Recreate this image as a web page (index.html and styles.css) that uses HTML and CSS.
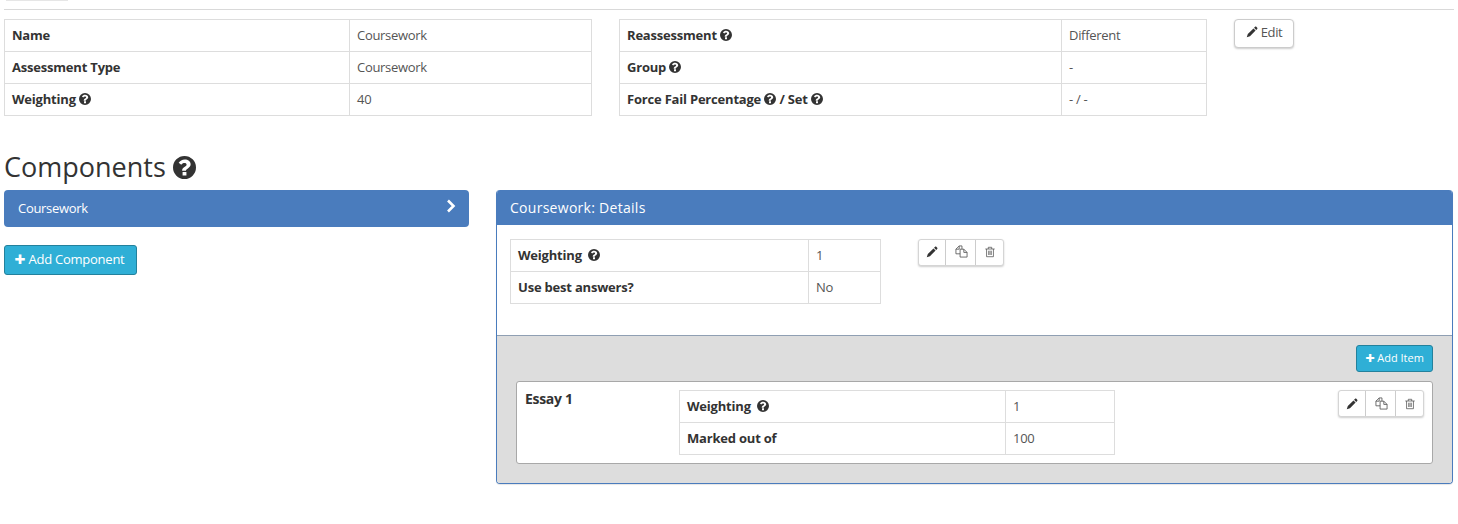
FILE: index.html
```html
<!DOCTYPE html>
<html lang="en">
<head>
<meta charset="utf-8">
<title>Components</title>
<link rel="stylesheet" href="styles.css">
</head>
<body>
<svg class="defs" width="0" height="0" aria-hidden="true">
  <symbol id="q" viewBox="0 0 24 24"><path fill-rule="evenodd" d="M12 0a12 12 0 1 0 0 24a12 12 0 0 0 0-24zM10 16.600h4v3.700h-4zM12.400 3.600c-3 0-5 1.300-6.500 3.500l2.700 2c.9-1.200 1.900-1.900 3.400-1.900c1.300 0 2.200.7 2.200 1.700c0 1-.7 1.500-1.900 2.300c-1.500.9-2.800 1.900-2.800 3.900v.4h4v-.3c0-.9.6-1.300 1.700-2c1.700-1 3.200-2.200 3.200-4.500c0-3.300-2.900-5.100-6-5.100z"/></symbol>
  <symbol id="pencil" viewBox="0 0 14 14"><path d="M10.600.9c.4-.4 1-.4 1.400 0l1.100 1.100c.4.4.4 1 0 1.400l-1.200 1.200l-2.500-2.500zM8.700 2.800l2.500 2.500l-6.600 6.600l-3.700 1.300l1.200-3.800z"/></symbol>
  <symbol id="copy" viewBox="0 0 14 14"><path fill="none" stroke="currentColor" stroke-width=".9" d="M5.500 9.500H1V4.500L4.500 1H7.500V4.500M4.500 1V4.500H1M5.500 4.500H9.500L13 8V13H5.500zM9.500 4.500V8H13"/></symbol>
  <symbol id="trash" viewBox="0 0 14 14"><path fill="none" stroke="currentColor" stroke-width=".9" d="M1.500 3.500H12.500M3 3.500V12.500H11V3.500M5 3.500V1.500H9V3.500M5.500 5.500V10.500M7 5.500V10.500M8.500 5.500V10.500"/></symbol>
</svg>

<div class="stub"></div>
<div class="rule"></div>

<section class="summary">
  <table class="info info-a">
    <tr><th>Name</th><td>Coursework</td></tr>
    <tr><th>Assessment Type</th><td>Coursework</td></tr>
    <tr><th>Weighting <svg class="qi"><use href="#q"/></svg></th><td>40</td></tr>
  </table>
  <table class="info info-b">
    <tr><th>Reassessment <svg class="qi"><use href="#q"/></svg></th><td>Different</td></tr>
    <tr><th>Group <svg class="qi"><use href="#q"/></svg></th><td>-</td></tr>
    <tr><th>Force Fail Percentage <svg class="qi"><use href="#q"/></svg> / Set <svg class="qi"><use href="#q"/></svg></th><td>- / -</td></tr>
  </table>
  <button class="btn btn-edit"><svg class="pi"><use href="#pencil"/></svg> Edit</button>
</section>

<h2 class="heading">Components <svg class="qh"><use href="#q"/></svg></h2>

<section class="columns">
  <aside class="left">
    <div class="comp-item"><span>Coursework</span><svg class="chev" viewBox="0 0 10 14"><path d="M2 1.500L7.500 7L2 12.500" fill="none" stroke="currentColor" stroke-width="2.600"/></svg></div>
    <button class="btn-info btn-add-comp"><span class="plus">✚</span> Add Component</button>
  </aside>
  <div class="panel">
    <div class="panel-head">Coursework: Details</div>
    <div class="panel-body">
      <table class="info info-c">
        <tr><th>Weighting <svg class="qi qi-gap"><use href="#q"/></svg></th><td>1</td></tr>
        <tr><th>Use best answers?</th><td>No</td></tr>
      </table>
      <div class="group">
        <span class="g g1"><svg class="gi"><use href="#pencil"/></svg></span><span class="g g2"><svg class="gi"><use href="#copy"/></svg></span><span class="g g3"><svg class="gi"><use href="#trash"/></svg></span>
      </div>
    </div>
    <div class="items">
      <div class="items-bar"><button class="btn-info btn-add-item"><span class="plus">✚</span> Add Item</button></div>
      <div class="card">
        <div class="card-title">Essay 1</div>
        <table class="info info-d">
          <tr><th>Weighting <svg class="qi qi-gap"><use href="#q"/></svg></th><td>1</td></tr>
          <tr><th>Marked out of</th><td>100</td></tr>
        </table>
        <div class="group group-card">
          <span class="g g1"><svg class="gi"><use href="#pencil"/></svg></span><span class="g g2"><svg class="gi"><use href="#copy"/></svg></span><span class="g g3"><svg class="gi"><use href="#trash"/></svg></span>
        </div>
      </div>
    </div>
  </div>
</section>
</body>
</html>
```
FILE: styles.css
```css
* { box-sizing: border-box; }
html, body { margin: 0; padding: 0; }
body {
  width: 1458px;
  height: 524px;
  overflow: hidden;
  background: #fff;
  color: #333;
  font-family: "Open Sans", "Liberation Sans", sans-serif;
  font-size: 13px;
  line-height: 18px;
}
.defs { position: absolute; }
.stub {
  width: 62px;
  height: 1px;
  margin-left: 6px;
  background: #e6e6e6;
}
.rule {
  height: 1px;
  margin: 8px 4px 9px 4px;
  background: #d9d9d9;
}
.summary {
  display: flex;
  align-items: flex-start;
  padding-left: 4px;
  height: 97px;
}
.info {
  border-collapse: collapse;
  table-layout: fixed;
  background: #fff;
}
.info th, .info td {
  border: 1px solid #ddd;
  height: 32px;
  padding: 0 7px 2px;
  text-align: left;
  vertical-align: middle;
  font-size: 13px;
}
.info th { font-weight: 700; color: #333; letter-spacing: -.2px; }
.info td { font-weight: 400; color: #555; letter-spacing: -.3px; }
.info-a { width: 588px; margin-right: 27px; }
.info-a th { width: 345px; }
.info-b { width: 588px; margin-right: 27px; }
.info-b th { width: 442px; }
.info-c { width: 371px; }
.info-c th { width: 298px; }
.info-d { width: 436px; }
.info-d th { width: 326px; }
.qi { width: 12px; height: 12px; fill: #333; vertical-align: -1.500px; }
.qi-gap { margin-left: 3px; }
.btn {
  display: inline-flex;
  align-items: center;
  justify-content: center;
  gap: 3px;
  width: 60px;
  height: 29px;
  padding: 0 0 3px;
  border: 1px solid #ccc;
  border-radius: 4px;
  background: #fff;
  box-shadow: 0 1px 2px rgba(0, 0, 0, .2);
  color: #555;
  font: 400 13px "Open Sans", "Liberation Sans", sans-serif;
  letter-spacing: -.4px;
}
.pi { width: 12px; height: 12px; fill: #333; }
.heading {
  margin: 35px 0 7px 4px;
  height: 32px;
  font-size: 27px;
  line-height: 32px;
  font-weight: 400;
  color: #333;
}
.qh { width: 23px; height: 23px; fill: #333; vertical-align: -2px; }
.columns {
  display: flex;
  align-items: flex-start;
  padding-left: 4px;
}
.left { width: 465px; margin-right: 27px; }
.comp-item {
  display: flex;
  align-items: center;
  justify-content: space-between;
  height: 37px;
  padding: 0 13px 2px 14px;
  border-radius: 4px;
  background: #4a7cbd;
  color: #fff;
  letter-spacing: -.3px;
}
.chev { width: 10px; height: 14px; margin-top: -3px; }
.btn-info {
  display: block;
  border: 1px solid #23819c;
  border-radius: 3px;
  background: #2fafd6;
  color: #fff;
  font-family: "Open Sans", "Liberation Sans", sans-serif;
  padding: 0 0 2px;
  text-align: center;
}
.plus { font-family: "DejaVu Sans", sans-serif; letter-spacing: 0; }
.btn-add-comp {
  width: 133px;
  height: 30px;
  margin-top: 18px;
  padding-right: 2px;
  font-size: 13px;
  letter-spacing: -.25px;
}
.btn-add-item {
  width: 77px;
  height: 27px;
  font-size: 11px;
}
.panel {
  width: 957px;
  height: 294px;
  display: flex;
  flex-direction: column;
  border: 1px solid #4a7cbd;
  border-top: 0;
  border-radius: 4px;
  overflow: hidden;
  box-shadow: 0 1px 1px rgba(0, 0, 0, .1);
}
.panel-head {
  height: 35px;
  padding: 9px 13px 0;
  background: #4a7cbd;
  color: #fff;
  font-size: 14px;
  letter-spacing: .28px;
}
.panel-body {
  height: 110px;
  display: flex;
  align-items: flex-start;
  padding: 14px 13px 0;
  background: #fff;
}
.group {
  display: flex;
  width: 86px;
  height: 27px;
  margin-left: 37px;
  border: 1px solid #d5d5d5;
  border-radius: 3px;
  background: #fff;
  box-shadow: 0 1px 2px rgba(0, 0, 0, .2);
}
.g {
  display: flex;
  align-items: center;
  justify-content: center;
  height: 100%;
  padding-bottom: 2px;
  color: #555;
}
.g1 { width: 27px; border-right: 1px solid #ccc; }
.g2 { width: 30px; padding-left: 2px; border-right: 1px solid #ccc; }
.g3 { width: 27px; }
.gi { width: 12px; height: 12px; fill: #333; }
.g2 .gi { width: 13px; height: 13px; }
.group-card .g { padding-bottom: 0; }
.items {
  flex: 1;
  padding: 9px 19px 0;
  background: #ddd;
  border-top: 1px solid #8f9fb3;
}
.items-bar {
  display: flex;
  justify-content: flex-end;
  height: 36px;
}
.card {
  display: flex;
  align-items: flex-start;
  width: 917px;
  height: 83px;
  padding: 8px 8px 0;
  background: #fff;
  border: 1px solid #a8a8a8;
  border-radius: 3px;
}
.card-title {
  width: 154px;
  font-weight: 700;
  font-size: 14px;
  color: #333;
  letter-spacing: -.3px;
}
.group-card { margin-left: 223px; }
```
